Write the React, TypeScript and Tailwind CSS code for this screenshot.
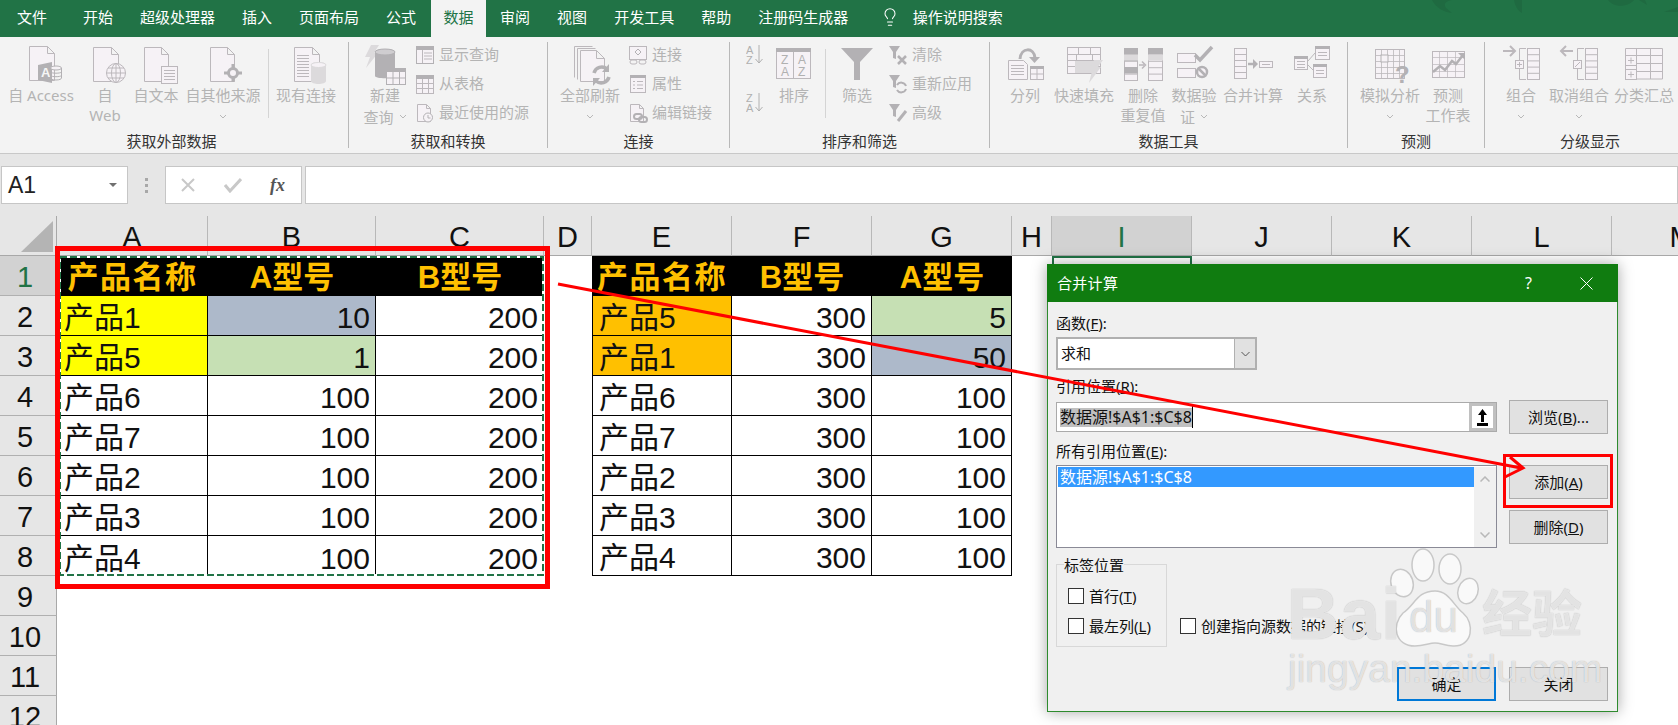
import { Lightbulb } from 'lucide-react';
import type { ReactNode } from 'react';

const OUT = '#bcb8bc';
const FILL = '#f6f2f6';
const DARK = '#b3b1b4';
const LIGHT = '#dcdadc';

const tabs = ['开始', '超级处理器', '插入', '页面布局', '公式'];
const tabsAfter = ['审阅', '视图', '开发工具', '帮助', '注册码生成器'];

const left = [
    ['产品1', '10', '200', 'bg-[#ffff00]', 'bg-[#adb9ca]'],
    ['产品5', '1', '200', 'bg-[#ffff00]', 'bg-[#c6e0b4]'],
    ['产品6', '100', '200', '', ''],
    ['产品7', '100', '200', '', ''],
    ['产品2', '100', '200', '', ''],
    ['产品3', '100', '200', '', ''],
    ['产品4', '100', '200', '', ''],
];

const right = [
    ['产品5', '300', '5', 'bg-[#ffc000]', 'bg-[#c6e0b4]'],
    ['产品1', '300', '50', 'bg-[#ffc000]', 'bg-[#adb9ca]'],
    ['产品6', '300', '100', '', ''],
    ['产品7', '300', '100', '', ''],
    ['产品2', '300', '100', '', ''],
    ['产品3', '300', '100', '', ''],
    ['产品4', '300', '100', '', ''],
];

const columnHeads = ['A', 'B', 'C', 'D', 'E', 'F', 'G', 'H', 'I', 'J', 'K', 'L', 'M'];

function Doc({ x, y, w, h, fold = 7 }: { x: number; y: number; w: number; h: number; fold?: number }) {
    return (
        <path
            d={`M${x + 0.5} ${y + 0.5}h${w - fold}l${fold} ${fold}v${h - fold}h-${w}z M${x + w - fold + 0.5} ${y + 0.5}v${fold}h${fold}`}
            fill={FILL}
            stroke={OUT}
        />
    );
}

function Lines({ x, y, w, n, gap = 3 }: { x: number; y: number; w: number; n: number; gap?: number }) {
    return (
        <>
            {Array.from({ length: n }, (_, i) => (
                <path key={i} d={`M${x} ${y + i * gap + 0.5}h${w}`} stroke={OUT} />
            ))}
        </>
    );
}

function Col({ x, y, w, h, rows }: { x: number; y: number; w: number; h: number; rows: number }) {
    return (
        <>
            <rect x={x + 0.5} y={y + 0.5} width={w} height={h} fill={FILL} stroke={OUT} />
            {Array.from({ length: rows - 1 }, (_, i) => (
                <path key={i} d={`M${x} ${y + 0.5 + ((i + 1) * h) / rows}h${w}`} stroke={OUT} />
            ))}
        </>
    );
}

function Big({ children }: { children: ReactNode }) {
    return (
        <svg width="44" height="41" viewBox="0 0 44 41" fill="none">
            {children}
        </svg>
    );
}

function Small({ children }: { children: ReactNode }) {
    return (
        <svg width="20" height="20" viewBox="0 0 20 20" fill="none" className="shrink-0">
            {children}
        </svg>
    );
}

function Chevron() {
    return (
        <svg width="8" height="5" viewBox="0 0 8 5" fill="none" className="inline-block">
            <path d="M1 1l3 3 3-3" stroke="#b8b8b8" />
        </svg>
    );
}

function Large({ w, icon, lines, chevron }: { w: string; icon: ReactNode; lines: string[]; chevron?: 'line' | 'inline' }) {
    return (
        <div className={`${w} shrink-0 flex flex-col items-center pt-[8px]`}>
            <div className="h-[41px]">{icon}</div>
            {lines.map((l, i) => (
                <div key={i} className="h-[19.5px] leading-[19.5px] whitespace-nowrap text-[15px] text-[#b4b4b4]">
                    {l}
                    {chevron === 'inline' && i === lines.length - 1 && <span className="ml-[5px] align-[2px]"><Chevron /></span>}
                </div>
            ))}
            {chevron === 'line' && (
                <div className="h-[19.5px] leading-[19.5px]">
                    <Chevron />
                </div>
            )}
        </div>
    );
}

function SmallRow({ icon, label }: { icon: ReactNode; label: string }) {
    return (
        <div className="h-[29px] flex items-center gap-[4px] whitespace-nowrap text-[15px] text-[#b4b4b4]">
            {icon}
            <span>{label}</span>
        </div>
    );
}

function Group({ w, label, className = '', labelClass = '', children }: { w: string; label: string; className?: string; labelClass?: string; children: ReactNode }) {
    return (
        <div className={`${w} shrink-0 h-[116px] flex flex-col`}>
            <div className={`h-[94px] flex ${className}`}>{children}</div>
            <div className={`h-[20px] leading-[20px] text-center text-[15px] text-[#333333] whitespace-nowrap ${labelClass}`}>{label}</div>
        </div>
    );
}

function Sep() {
    return <div className="w-px h-[106px] mt-[5px] shrink-0 bg-[#b8b8b8]" />;
}

function InnerSep() {
    return <div className="w-px h-[69px] mt-[12px] shrink-0 bg-[#d4d4d4]" />;
}

function Funnel() {
    return <path d="M1 1h11l-4 6v7l-3-1V7z" fill={DARK} />;
}

function Chain({ x, y }: { x: number; y: number }) {
    return (
        <g stroke={DARK} strokeWidth="2" fill="none">
            <rect x={x} y={y} width="8" height="5" rx="2.5" />
            <rect x={x + 5} y={y + 3} width="8" height="5" rx="2.5" />
        </g>
    );
}

function Ribbon() {
    return (
        <div className="h-[117px] bg-[#f3f3f3] border-b border-[#c8c8c8] flex overflow-hidden">
            <Group w="w-[348px]" label="获取外部数据" className="pl-[3px]" labelClass="pr-[5px]">
                <Large
                    w="w-[76px]"
                    lines={['自 Access']}
                    icon={
                        <Big>
                            <Doc x={10} y={1} w={25} h={34} />
                            <path d="M19 20l14-3v21l-14-3z" fill={DARK} />
                            <text x="22" y="32" fontSize="13" fontWeight="700" fill="#f6f6f6" fontFamily="Liberation Sans">A</text>
                            <ellipse cx="37" cy="23" rx="5.5" ry="2" fill={FILL} stroke={DARK} />
                            <path d="M31.5 23v10c0 1 2 2 5.5 2s5.5-1 5.5-2V23M31.5 27c1 1.6 10 1.6 11 0M31.5 30.500c1 1.600 10 1.600 11 0" stroke={DARK} fill="none" />
                        </Big>
                    }
                />
                <Large
                    w="w-[52px]"
                    lines={['自', 'Web']}
                    icon={
                        <Big>
                            <Doc x={10} y={2} w={25} h={34} />
                            <circle cx="33" cy="28" r="9.500" fill={FILL} stroke={OUT} />
                            <ellipse cx="33" cy="28" rx="4.500" ry="9.500" stroke={OUT} />
                            <path d="M23.500 28h19M25 23h16M25 33h16M33 18.500v19" stroke={OUT} />
                        </Big>
                    }
                />
                <Large
                    w="w-[50px]"
                    lines={['自文本']}
                    icon={
                        <Big>
                            <Doc x={10} y={2} w={24} h={34} />
                            <rect x="27.500" y="21.500" width="16" height="17" fill={FILL} stroke={OUT} />
                            <Lines x={30} y={25} w={11} n={4} />
                        </Big>
                    }
                />
                <Large
                    w="w-[84px]"
                    lines={['自其他来源']}
                    chevron="line"
                    icon={
                        <Big>
                            <Doc x={9} y={2} w={24} h={34} />
                            <path d="M32 19v5M32 32v5M23 28h5M36 28h5" stroke={DARK} strokeWidth="3" />
                            <circle cx="32" cy="28" r="4.500" fill={FILL} stroke={DARK} strokeWidth="3" />
                        </Big>
                    }
                />
                <div className="ml-[3px]">
                    <InnerSep />
                </div>
                <Large
                    w="w-[74px]"
                    lines={['现有连接']}
                    icon={
                        <Big>
                            <Doc x={10} y={2} w={25} h={34} />
                            <Lines x={13} y={10} w={12} n={8} />
                            <path d="M27 20c0-4 15-4 15 0v16c0 4-15 4-15 0z" fill={LIGHT} />
                            <ellipse cx="34.500" cy="20" rx="7.500" ry="2.500" fill={FILL} stroke={LIGHT} />
                        </Big>
                    }
                />
            </Group>
            <Sep />
            <Group w="w-[198px]" label="获取和转换" className="pl-[6px]">
                <Large
                    w="w-[60px]"
                    lines={['新建', '查询']}
                    chevron="inline"
                    icon={
                        <Big>
                            <path d="M8 0h8l-5 8h4L3 23l4-11H2z" fill={LIGHT} />
                            <path d="M12 7c0-4 20-4 20 0v24c0 3-20 3-20 0z" fill={DARK} />
                            <ellipse cx="22" cy="7" rx="10" ry="3" fill="#cfcdd0" stroke={DARK} />
                            <rect x="23.500" y="23.500" width="19" height="16" fill={FILL} stroke={DARK} />
                            <path d="M23 23h20v4H23z" fill={DARK} />
                            <path d="M30 27v12M36.500 27v12M24 33h18" stroke={DARK} />
                        </Big>
                    }
                />
                <div className="pt-[3px]">
                    <SmallRow
                        label="显示查询"
                        icon={
                            <Small>
                                <rect x="1.500" y="1.500" width="17" height="17" fill={FILL} stroke={DARK} />
                                <path d="M1 1h18v4H1z" fill={DARK} />
                                <path d="M9 8h8M9 11h8M9 14h8M7.500 5v13" stroke={OUT} />
                            </Small>
                        }
                    />
                    <SmallRow
                        label="从表格"
                        icon={
                            <Small>
                                <rect x="1.500" y="1.500" width="17" height="18" fill={FILL} stroke={OUT} />
                                <path d="M1 1h18v4H1z" fill={DARK} />
                                <path d="M7.500 5v14M13.500 5v14M2 9.500h16M2 14.500h16" stroke={OUT} />
                            </Small>
                        }
                    />
                    <SmallRow
                        label="最近使用的源"
                        icon={
                            <Small>
                                <path d="M2.500 1.500h9l4 4v13h-13z M11.500 1.500v4h4" fill={FILL} stroke={OUT} />
                                <circle cx="13" cy="14.500" r="4.500" fill={FILL} stroke={DARK} />
                                <path d="M13 12v3h2.500" stroke={DARK} />
                            </Small>
                        }
                    />
                </div>
            </Group>
            <Sep />
            <Group w="w-[181px]" label="连接" className="pl-[12px]">
                <Large
                    w="w-[60px]"
                    lines={['全部刷新']}
                    chevron="line"
                    icon={
                        <Big>
                            <path d="M6.500 1.500h18M6.500 1.500v31" stroke={OUT} />
                            <path d="M9.500 3.500h18M9.500 3.500v31" stroke={OUT} />
                            <path d="M12.500 5.500h16l8 8v23h-24z M28.500 5.500v8h8" fill={FILL} stroke={OUT} />
                            <path d="M26 28a8 8 0 0 1 13-4M41 32a8 8 0 0 1-13 4" stroke={DARK} strokeWidth="3.500" />
                            <path d="M41 19v8h-7zM25 41v-8h7z" fill={DARK} />
                        </Big>
                    }
                />
                <div className="pt-[3px] ml-[8px]">
                    <SmallRow
                        label="连接"
                        icon={
                            <Small>
                                <rect x="1.500" y="1.500" width="17" height="13" fill={FILL} stroke={OUT} />
                                <path d="M10 4l3 3-3 3-3-3z" fill={FILL} stroke={DARK} />
                                <rect x="2" y="15" width="7" height="4" rx="2" stroke={OUT} />
                                <rect x="11" y="15" width="7" height="4" rx="2" stroke={OUT} />
                            </Small>
                        }
                    />
                    <SmallRow
                        label="属性"
                        icon={
                            <Small>
                                <rect x="2.500" y="1.500" width="15" height="17" fill={FILL} stroke={OUT} />
                                <path d="M2 1h16v3H2z" fill={DARK} />
                                <path d="M5 7.500h2M9 7.500h6M5 11h2M9 11h6M5 14.500h2M9 14.500h6" stroke={OUT} />
                            </Small>
                        }
                    />
                    <SmallRow
                        label="编辑链接"
                        icon={
                            <Small>
                                <path d="M2.500 1.500h9l4 4v13h-13z M11.500 1.500v4h4" fill={FILL} stroke={OUT} />
                                <Chain x={6} y={11} />
                            </Small>
                        }
                    />
                </div>
            </Group>
            <Sep />
            <Group w="w-[259px]" label="排序和筛选" className="pl-[16px]">
                <div className="w-[18px] shrink-0 pt-[6px]">
                    <svg width="18" height="24" viewBox="0 0 18 24" fill="none">
                        <text x="0" y="11" fontSize="11" fill="#b0b0b0" fontFamily="Liberation Sans">A</text>
                        <text x="0" y="21" fontSize="11" fill="#b0b0b0" fontFamily="Liberation Sans">Z</text>
                        <path d="M13 2v18M9.500 16l3.500 4 3.500-4" stroke="#b0b0b0" />
                    </svg>
                    <div className="h-[24px]" />
                    <svg width="18" height="24" viewBox="0 0 18 24" fill="none">
                        <text x="0" y="11" fontSize="11" fill="#b0b0b0" fontFamily="Liberation Sans">Z</text>
                        <text x="0" y="21" fontSize="11" fill="#b0b0b0" fontFamily="Liberation Sans">A</text>
                        <path d="M13 2v18M9.500 16l3.500 4 3.500-4" stroke="#b0b0b0" />
                    </svg>
                </div>
                <Large
                    w="w-[60px]"
                    lines={['排序']}
                    icon={
                        <Big>
                            <rect x="4.500" y="3.500" width="34" height="30" fill={FILL} stroke={OUT} />
                            <path d="M4 3h35v4H4z" fill={DARK} />
                            <path d="M21.500 7v27" stroke={OUT} />
                            <text x="9" y="19" fontSize="12" fill="#b0b0b0" fontFamily="Liberation Sans">Z</text>
                            <text x="9" y="31" fontSize="12" fill="#b0b0b0" fontFamily="Liberation Sans">A</text>
                            <text x="26" y="19" fontSize="12" fill="#b0b0b0" fontFamily="Liberation Sans">A</text>
                            <text x="26" y="31" fontSize="12" fill="#b0b0b0" fontFamily="Liberation Sans">Z</text>
                        </Big>
                    }
                />
                <div className="ml-px">
                    <InnerSep />
                </div>
                <Large
                    w="w-[62px]"
                    lines={['筛选']}
                    icon={
                        <Big>
                            <path d="M6 3h32L25 17v18h-6V17z" fill={DARK} />
                        </Big>
                    }
                />
                <div className="pt-[3px]">
                    <SmallRow
                        label="清除"
                        icon={
                            <Small>
                                <Funnel />
                                <path d="M10 11l8 8M18 11l-8 8" stroke={DARK} strokeWidth="2.500" />
                            </Small>
                        }
                    />
                    <SmallRow
                        label="重新应用"
                        icon={
                            <Small>
                                <Funnel />
                                <path d="M9 11a5 5 0 0 1 9 1M18 15a5 5 0 0 1-9 1" stroke={DARK} strokeWidth="2" />
                            </Small>
                        }
                    />
                    <SmallRow
                        label="高级"
                        icon={
                            <Small>
                                <Funnel />
                                <path d="M18 8L10 18" stroke={DARK} strokeWidth="3" />
                            </Small>
                        }
                    />
                </div>
            </Group>
            <Sep />
            <Group w="w-[357px]" label="数据工具" className="pl-[6px]">
                <Large
                    w="w-[58px]"
                    lines={['分列']}
                    icon={
                        <Big>
                            <path d="M5.500 15.500h15l4 4v15h-19z" fill={FILL} stroke={OUT} />
                            <Lines x={8} y={20} w={13} n={4} />
                            <rect x="27.500" y="21.500" width="13" height="13" fill={FILL} stroke={OUT} />
                            <path d="M27 21h14v3H27z" fill={DARK} />
                            <path d="M34 24v10M28 29h12" stroke={OUT} />
                            <path d="M17 14c1-12 14-12 15-1" stroke={DARK} strokeWidth="3" />
                            <path d="M26 12h11l-5.500 6z" fill={DARK} />
                        </Big>
                    }
                />
                <Large
                    w="w-[60px]"
                    lines={['快速填充']}
                    icon={
                        <Big>
                            <rect x="5.500" y="2.500" width="33" height="26" fill={FILL} stroke={OUT} />
                            <path d="M5 9.500h34M5 15.500h34M5 21.500h34M16.500 2v27M28.500 2v27" stroke={OUT} />
                            <path d="M13 16h22v12H13z" fill={LIGHT} />
                            <rect x="14.500" y="9.500" width="16" height="6" fill={FILL} stroke={OUT} />
                            <path d="M32 15h9l-5 7h3L27 38l3-12h-4z" fill={LIGHT} />
                        </Big>
                    }
                />
                <Large
                    w="w-[58px]"
                    lines={['删除', '重复值']}
                    icon={
                        <Big>
                            <Col x={3} y={3} w={13} h={32} rows={5} />
                            <path d="M3 3h14v6.500H3zM3 22h14v6.500H3zM3 9.500h14V16H3z" fill={DARK} />
                            <path d="M3 9.500h14v6H3z" fill={LIGHT} />
                            <Col x={27} y={3} w={14} h={32} rows={5} />
                            <path d="M27 3h15v6.500H27z" fill={DARK} />
                            <path d="M27 9.500h15v6H27z" fill={LIGHT} />
                            <path d="M18 20h5M21 16.500l3.500 3.500-3.500 3.500" stroke={OUT} strokeWidth="1.500" />
                        </Big>
                    }
                />
                <Large
                    w="w-[44px]"
                    lines={['数据验', '证']}
                    chevron="inline"
                    icon={
                        <Big>
                            <rect x="5.500" y="8.500" width="18" height="9" fill={FILL} stroke={OUT} />
                            <rect x="5.500" y="23.500" width="18" height="9" fill={FILL} stroke={OUT} />
                            <path d="M23 10l5 5L40 2" stroke={DARK} strokeWidth="3.500" />
                            <circle cx="30" cy="27" r="5" fill={FILL} stroke={DARK} strokeWidth="2.500" />
                            <path d="M26.500 23.500l7 7" stroke={DARK} strokeWidth="2.500" />
                        </Big>
                    }
                />
                <Large
                    w="w-[74px]"
                    lines={['合并计算']}
                    icon={
                        <Big>
                            <Col x={3} y={3} w={12} h={30} rows={5} />
                            <path d="M17 19h7" stroke={DARK} strokeWidth="2.500" />
                            <path d="M22 14l5 5-5 5z" fill={DARK} />
                            <rect x="28.500" y="16.500" width="13" height="6" fill={FILL} stroke={OUT} />
                            <path d="M31 19.500h8" stroke={OUT} />
                        </Big>
                    }
                />
                <Large
                    w="w-[44px]"
                    lines={['关系']}
                    icon={
                        <Big>
                            <rect x="25.500" y="1.500" width="14" height="13" fill={FILL} stroke={OUT} />
                            <path d="M25 1h15v3H25z" fill={DARK} />
                            <rect x="4.500" y="11.500" width="13" height="13" fill={FILL} stroke={OUT} />
                            <path d="M4 11h14v3H4z" fill={DARK} />
                            <rect x="23.500" y="19.500" width="13" height="13" fill={FILL} stroke={OUT} />
                            <path d="M23 19h14v3H23z" fill={DARK} />
                            <path d="M18 16l7-8M18 20l5 5" stroke={OUT} />
                            <Lines x={28} y={7} w={9} n={2} />
                            <Lines x={7} y={16} w={8} n={3} />
                            <Lines x={26} y={25} w={8} n={2} />
                        </Big>
                    }
                />
            </Group>
            <Sep />
            <Group w="w-[136px]" label="预测" className="pl-[12px]">
                <Large
                    w="w-[60px]"
                    lines={['模拟分析']}
                    chevron="line"
                    icon={
                        <Big>
                            <rect x="7.500" y="4.500" width="29" height="29" fill={FILL} stroke={OUT} />
                            <path d="M13.500 4v30M19.500 4v30M25.500 4v30M31.500 4v30M7 10.500h30M7 16.500h30M7 22.500h30M7 28.500h30" stroke={OUT} strokeOpacity="0.8" />
                            <rect x="13" y="10" width="7" height="7" fill={FILL} stroke={DARK} />
                            <text x="27" y="38" fontSize="24" fontWeight="700" fill={DARK} fontFamily="Liberation Sans">?</text>
                        </Big>
                    }
                />
                <Large
                    w="w-[56px]"
                    lines={['预测', '工作表']}
                    icon={
                        <Big>
                            <rect x="6.500" y="6.500" width="32" height="26" fill={FILL} stroke={OUT} />
                            <path d="M6 12.500h33M6 19.500h33M6 26.500h33M13.500 6v27M21.500 6v27M29.500 6v27" stroke={OUT} strokeOpacity="0.7" />
                            <path d="M7 27l7-6 5 4 7-9 4 3 7-9" stroke={DARK} strokeWidth="2.500" />
                            <path d="M32 8h7v7z" fill={DARK} />
                        </Big>
                    }
                />
            </Group>
            <Sep />
            <Group w="w-[210px]" label="分级显示" className="pl-[12px]">
                <Large
                    w="w-[48px]"
                    lines={['组合']}
                    chevron="line"
                    icon={
                        <Big>
                            <path d="M4 6h12M11 1l5 5-5 5" stroke={OUT} strokeWidth="2" />
                            <path d="M27 3.500h-6.500v31H27" stroke={OUT} />
                            <Col x={28} y={3} w={12} h={31} rows={5} />
                            <rect x="16.500" y="15.500" width="8" height="8" fill={FILL} stroke={OUT} />
                            <path d="M18 19.500h5M20.500 17v5" stroke={OUT} />
                        </Big>
                    }
                />
                <Large
                    w="w-[68px]"
                    lines={['取消组合']}
                    chevron="line"
                    icon={
                        <Big>
                            <path d="M16 6H4M9 1L4 6l5 5" stroke={OUT} strokeWidth="2" />
                            <path d="M27 3.500h-6.500v31H27" stroke={OUT} />
                            <Col x={28} y={3} w={12} h={31} rows={5} />
                            <rect x="16.500" y="15.500" width="8" height="8" fill={FILL} stroke={OUT} />
                            <path d="M18 22l5-5" stroke={OUT} />
                        </Big>
                    }
                />
                <Large
                    w="w-[62px]"
                    lines={['分类汇总']}
                    icon={
                        <Big>
                            <path d="M3.500 14V3.500H40.500V34H3.500V14" fill={FILL} stroke={OUT} />
                            <path d="M14.500 3v31M28.500 3v31M14 10.500h27M14 18.500h27M14 26.500h27" stroke={OUT} />
                            <rect x="3.500" y="10.500" width="11" height="10" fill={FILL} stroke={OUT} />
                            <rect x="3.500" y="24.500" width="11" height="10" fill={FILL} stroke={OUT} />
                            <path d="M6 15.500h6M9 12.500v6M6 29.500h6M9 26.500v6" stroke={OUT} />
                        </Big>
                    }
                />
            </Group>
        </div>
    );
}

function FormulaBar() {
    return (
        <div className="h-[62px] bg-[#e6e6e6] pt-[12px] flex items-start">
            <div className="ml-px w-[127px] h-[38px] bg-white border border-[#c6c6c6] flex items-center justify-between pl-[6px] pr-[10px]">
                <span className="text-[23px] text-[#222222] font-['Liberation_Sans',sans-serif]">A1</span>
                <span className="border-x-[4px] border-t-[4px] border-x-transparent border-t-[#707070]" />
            </div>
            <div className="w-[37px] h-[38px] flex flex-col items-center justify-center gap-[3px]">
                <span className="w-[3px] h-[3px] bg-[#a8a8a8]" />
                <span className="w-[3px] h-[3px] bg-[#a8a8a8]" />
                <span className="w-[3px] h-[3px] bg-[#a8a8a8]" />
            </div>
            <div className="w-[137px] h-[38px] bg-white border border-[#c6c6c6] flex items-center pl-[14px]">
                <svg width="16" height="16" viewBox="0 0 16 16" fill="none">
                    <path d="M2 2l12 12M14 2L2 14" stroke="#c8c8c8" strokeWidth="2" />
                </svg>
                <svg width="18" height="16" viewBox="0 0 18 16" fill="none" className="ml-[28px]">
                    <path d="M1 8l5 6L17 2" stroke="#c8c8c8" strokeWidth="3" />
                </svg>
                <span className="ml-[28px] text-[18px] italic font-bold text-[#555555] font-['Liberation_Serif',serif]">fx</span>
            </div>
            <div className="ml-[3px] flex-1 h-[38px] bg-white border border-[#c6c6c6]" />
        </div>
    );
}

function Cell({ children, className = '' }: { children?: ReactNode; className?: string }) {
    return <div className={`flex items-center pt-[4px] whitespace-nowrap text-[#111111] ${className}`}>{children}</div>;
}

function Sheet() {
    return (
        <div className="relative grid grid-cols-[57px_151px_168px_168px_48px_140px_140px_140px_40px_140px_140px_140px_140px_140px] auto-rows-[40px] font-['Liberation_Sans','Noto_Sans_CJK_SC',sans-serif]">
            {/* corner */}
            <div className="bg-[#e6e6e6] border-r border-b border-[#a8a8a8] flex items-end justify-end pr-[3px] pb-[3px]">
                <svg width="32" height="31" viewBox="0 0 32 31">
                    <path d="M32 0v31H0z" fill="#b4b4b4" />
                </svg>
            </div>
            {columnHeads.map((c) => (
                <div
                    key={c}
                    className={`flex items-center justify-center pt-[4px] text-[29px] border-r border-b border-r-[#b8b8b8] border-b-[#a8a8a8] ${c === 'I' ? 'bg-[#d2d2d2] text-[#217346]' : 'bg-[#e6e6e6] text-[#111111]'}`}
                >
                    {c}
                </div>
            ))}

            {/* row 1 */}
            <RowHead n={1} />
            <HeadCell className="tracking-[1.5px]">产品名称</HeadCell>
            <HeadCell>A型号</HeadCell>
            <HeadCell>B型号</HeadCell>
            <div />
            <HeadCell className="tracking-[1.5px]">产品名称</HeadCell>
            <HeadCell>B型号</HeadCell>
            <HeadCell>A型号</HeadCell>
            <div />
            <div className="border-2 border-[#217346]" />
            <div />
            <div />
            <div />
            <div />

            {left.map((r, i) => (
                <Row key={i} n={i + 2} l={r} r={right[i]} last={i === left.length - 1} />
            ))}

            {[9, 10, 11, 12].map((n) => (
                <Blank key={n} n={n} />
            ))}

            {/* copy range marquee */}
            <svg className="absolute left-[57px] top-[40px]" width="490" height="322" viewBox="0 0 490 322" fill="none">
                <rect x="3" y="1" width="483" height="318" stroke="#ffffff" strokeWidth="2" />
                <rect x="3" y="1" width="483" height="318" stroke="#217346" strokeWidth="2" strokeDasharray="7 3" />
            </svg>
        </div>
    );
}

function RowHead({ n }: { n: number }) {
    return (
        <div
            className={`flex items-center justify-center pt-[4px] pr-[6px] text-[29px] border-r border-b border-r-[#a8a8a8] border-b-[#b0b0b0] ${n === 1 ? 'bg-[#d2d2d2] text-[#217346]' : 'bg-[#e6e6e6] text-[#111111]'}`}
        >
            {n}
        </div>
    );
}

function HeadCell({ children, className = '' }: { children: ReactNode; className?: string }) {
    return (
        <div className={`bg-black flex items-center justify-center pt-[4px] text-[#ffc000] font-bold text-[31px] whitespace-nowrap ${className}`}>{children}</div>
    );
}

function Row({ n, l, r, last }: { n: number; l: string[]; r: string[]; last: boolean }) {
    const line = 'border-r border-b border-black';
    const edge = last ? 'border-r border-r-black' : 'border-r border-b border-black';
    return (
        <>
            <RowHead n={n} />
            <Cell className={`${edge} pl-[7px] text-[30px] ${l[3]}`}>{l[0]}</Cell>
            <Cell className={`${edge} justify-end pr-[5px] text-[30px] ${l[4]}`}>{l[1]}</Cell>
            <Cell className={`${last ? '' : 'border-b border-black'} justify-end pr-[6px] text-[30px]`}>{l[2]}</Cell>
            <div />
            <Cell className={`${line} border-l pl-[6px] text-[30px] ${r[3]}`}>{r[0]}</Cell>
            <Cell className={`${line} justify-end pr-[5px] text-[30px]`}>{r[1]}</Cell>
            <Cell className={`${line} justify-end pr-[5px] text-[30px] ${r[4]}`}>{r[2]}</Cell>
            <div />
            <div />
            <div />
            <div />
            <div />
            <div />
        </>
    );
}

function Blank({ n }: { n: number }) {
    return (
        <>
            <RowHead n={n} />
            <div className="col-span-13" />
        </>
    );
}

function Btn({ children, primary = false, className = '' }: { children: ReactNode; primary?: boolean; className?: string }) {
    return (
        <div
            className={`w-[99px] h-[34px] bg-[#e1e1e1] flex items-center justify-center text-[15px] text-[#111111] ${primary ? 'border-2 border-[#0078d7]' : 'border border-[#adadad]'} ${className}`}
        >
            {children}
        </div>
    );
}

function Check({ label, hot }: { label: string; hot: string }) {
    return (
        <div className="flex items-center gap-[5px] whitespace-nowrap text-[15px] text-[#111111] h-[16px]">
            <span className="w-[16px] h-[16px] bg-white border border-[#333333] shrink-0" />
            <span>
                {label}(<u>{hot}</u>)
            </span>
        </div>
    );
}

function Dialog() {
    return (
        <div className="absolute left-[1047px] top-[264px] w-[571px] h-[448px] bg-[#f0f0f0] border border-[#2e8b2e] border-t-0 shadow-[0_0_14px_rgba(0,0,0,0.35)] font-['Noto_Sans','Noto_Sans_CJK_SC',sans-serif]">
            <div className="h-[38px] -mx-px bg-[#107c10] flex items-center pl-[10px] text-white text-[15px]">
                <span className="flex-1 tracking-[0.3px]">合并计算</span>
                <span className="mr-[48px] text-[16px]">?</span>
                <svg width="13" height="13" viewBox="0 0 13 13" fill="none" className="mr-[25px]">
                    <path d="M.5.500l12 12M12.500.500l-12 12" stroke="white" />
                </svg>
            </div>
            <div className="flex pl-[8px]">
                <div className="w-[441px]">
                    <div className="mt-[11px] h-[20px] leading-[20px] text-[15px] text-[#111111]">
                        函数(<u>F</u>):
                    </div>
                    <div className="mt-[4px] w-[201px] h-[33px] bg-white border-2 border-[#b0b0b0] flex items-center">
                        <span className="flex-1 pl-[3px] text-[15px] text-[#111111]">求和</span>
                        <span className="w-[21px] h-full bg-[#e1e1e1] border-l border-[#b0b0b0] flex items-center justify-center">
                            <svg width="9" height="6" viewBox="0 0 9 6" fill="none">
                                <path d="M.5 1l4 4 4-4" stroke="#555555" />
                            </svg>
                        </span>
                    </div>
                    <div className="mt-[6px] h-[20px] leading-[20px] text-[15px] text-[#111111]">
                        引用位置(<u>R</u>):
                    </div>
                    <div className="mt-[6px] h-[30px] bg-white border border-[#aaaaaa] flex items-center">
                        <div className="flex-1 pl-[3px] flex items-center">
                            <span className="bg-[#c0c0c0] text-[16px] leading-[19px] text-[#111111] whitespace-nowrap">数据源!$A$1:$C$8</span>
                            <span className="w-px h-[22px] bg-black" />
                        </div>
                        <div className="w-[27px] h-full border-[3px] border-[#c0c0c0] bg-white flex items-center justify-center">
                            <svg width="11" height="17" viewBox="0 0 11 17">
                                <path d="M5.500 0L10 6H7v7H4V6H1z" fill="black" />
                                <path d="M0 14h11v3H0z" fill="black" />
                            </svg>
                        </div>
                    </div>
                    <div className="mt-[9px] h-[20px] leading-[20px] text-[15px] text-[#111111]">
                        所有引用位置(<u>E</u>):
                    </div>
                    <div className="mt-[4px] h-[83px] bg-white border border-[#8a8a96] flex p-px pr-0 pb-0">
                        <div className="flex-1">
                            <div className="h-[20px] leading-[20px] bg-[#3399ff] text-white text-[16px] pl-[2px] whitespace-nowrap">数据源!$A$1:$C$8</div>
                        </div>
                        <div className="w-[22px] bg-[#f0f0f0] flex flex-col items-center justify-between py-[9px]">
                            <svg width="10" height="6" viewBox="0 0 10 6" fill="none">
                                <path d="M.5 5.500L5 1l4.500 4.500" stroke="#b8b8b8" strokeWidth="1.500" />
                            </svg>
                            <svg width="10" height="6" viewBox="0 0 10 6" fill="none">
                                <path d="M.5.500L5 5 9.500.500" stroke="#b8b8b8" strokeWidth="1.500" />
                            </svg>
                        </div>
                    </div>
                    <div className="mt-[16px] flex items-start">
                        <div className="relative w-[111px] h-[83px] border border-[#d8d8d8] pl-[11px] pt-[23px] flex flex-col gap-[14px]">
                            <span className="absolute left-[7px] -top-[10px] bg-[#f0f0f0] text-[15px] leading-[20px] text-[#111111]">标签位置</span>
                            <Check label="首行" hot="T" />
                            <Check label="最左列" hot="L" />
                        </div>
                        <div className="ml-[13px] mt-[54px]">
                            <Check label="创建指向源数据的链接" hot="S" />
                        </div>
                    </div>
                </div>
                <div className="ml-[12px] pt-[98px] flex flex-col">
                    <Btn>
                        <span>
                            浏览(<u>B</u>)...
                        </span>
                    </Btn>
                    <Btn className="mt-[31px]">
                        <span>
                            添加(<u>A</u>)
                        </span>
                    </Btn>
                    <Btn className="mt-[11px]">
                        <span>
                            删除(<u>D</u>)
                        </span>
                    </Btn>
                </div>
            </div>
            <div className="mt-[20px] flex justify-end gap-[13px] pr-[9px]">
                <Btn primary>确定</Btn>
                <Btn>关闭</Btn>
            </div>
        </div>
    );
}

function Watermark() {
    const text = "absolute text-white/70 [text-shadow:0_0_1px_#a0a0a0] font-['Liberation_Sans','Noto_Sans_CJK_SC',sans-serif] whitespace-nowrap";
    return (
        <>
            <svg className="absolute left-[1385px] top-[545px]" width="100" height="115" viewBox="0 0 100 115">
                <g fill="#ffffff" fillOpacity="0.6" stroke="#c8c8c8" strokeWidth="1.500">
                    <ellipse cx="17" cy="38" rx="11" ry="14" transform="rotate(-18 17 38)" />
                    <ellipse cx="38" cy="20" rx="11" ry="16" />
                    <ellipse cx="65" cy="24" rx="11" ry="15" />
                    <ellipse cx="83" cy="46" rx="10" ry="13" transform="rotate(18 83 46)" />
                    <path d="M50 46c14 0 18 14 28 22 12 10 10 34-10 33-8 0-12-3-18-3s-11 3-20 3C10 101 6 80 18 68c12-8 14-22 32-22z" />
                </g>
            </svg>
            <span className={`${text} left-[1287px] top-[574px] text-[72px] leading-[80px] font-bold tracking-[1px]`}>Bai</span>
            <span className={`${text} left-[1409px] top-[592px] text-[44px] leading-[50px]`}>du</span>
            <span className={`${text} left-[1482px] top-[587px] text-[50px] leading-[56px] font-bold`}>经验</span>
            <span className={`${text} left-[1288px] top-[646px] text-[39px] leading-[46px]`}>jingyan.baidu.com</span>
        </>
    );
}

export default function App() {
    return (
        <div className="relative w-[1678px] h-[725px] overflow-hidden bg-white font-['Noto_Sans','Noto_Sans_CJK_SC',sans-serif]">
            <div className="relative h-[37px] bg-[#217346] flex text-white text-[15px] whitespace-nowrap">
                <div className="ml-[3.500px] mr-[9px] px-[13.500px] h-[34px] leading-[34px]">文件</div>
                {tabs.map((t) => (
                    <div key={t} className="px-[13.500px] h-[34px] leading-[34px]">
                        {t}
                    </div>
                ))}
                <div className="ml-[1.500px] mr-[0.500px] w-[55px] h-[37px] leading-[34px] text-center bg-[#f3f3f3] text-[#217346]">数据</div>
                {tabsAfter.map((t) => (
                    <div key={t} className="px-[13.500px] h-[34px] leading-[34px]">
                        {t}
                    </div>
                ))}
                <div className="ml-[18px] flex items-center h-[34px] gap-[13px]">
                    <Lightbulb size={20} strokeWidth={1.250} />
                    <span>操作说明搜索</span>
                </div>
                <svg className="absolute right-0 top-0" width="246" height="14" viewBox="0 0 246 14">
                    <path d="M0 0h20c-6 1-9 4-6 8l6 5C12 12 4 8 0 0zM82 0h8v13C85 10 83 5 82 0zM176 0h26c-3 5-18 10-26 0zM207 0h6l2 5zM232 12l14-5v5z" fill="#1f6a41" />
                </svg>
            </div>
            <Ribbon />
            <FormulaBar />
            <Sheet />
            <Dialog />
            <div className="absolute left-[55px] top-[246px] w-[495px] h-[343px] border-[5px] border-[#ff0000]" />
            <div className="absolute left-[1503px] top-[454px] w-[110px] h-[54px] border-[3px] border-[#ff0000]" />
            <svg className="absolute left-0 top-0" width="1678" height="725" viewBox="0 0 1678 725" fill="none">
                <path d="M558 284L1521 468" stroke="#ff0000" strokeWidth="3" />
                <path d="M1510 457L1523 468L1505 477" stroke="#ff0000" strokeWidth="3" />
            </svg>
            <Watermark />
        </div>
    );
}
